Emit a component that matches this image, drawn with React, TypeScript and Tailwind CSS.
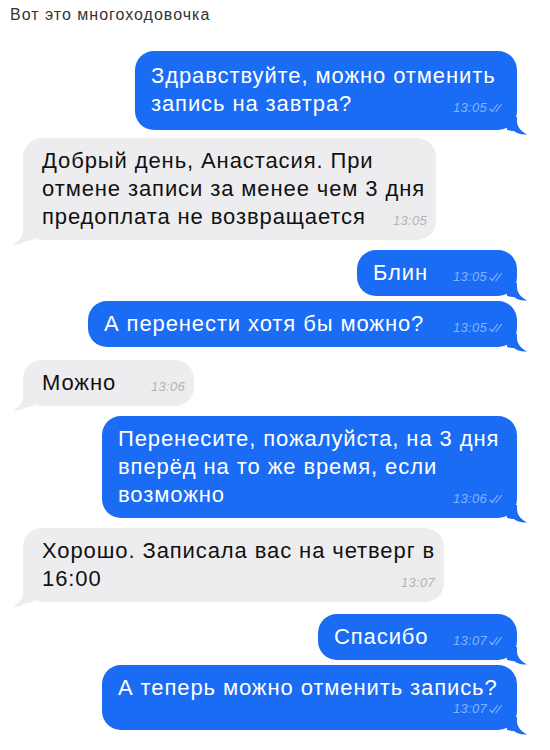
import React from "react";

type Message = {
  out: boolean;
  lines: string[];
  time: string;
  width: string;
  gap: string;
  extra?: string;
  timeOwnLine?: boolean;
};

const messages: Message[] = [
  { out: true, lines: ["Здравствуйте, можно отменить", "запись на завтра?"], time: "13:05", width: "w-[382px]", gap: "mt-0", extra: "pt-[11px] pb-[12px]" },
  { out: false, lines: ["Добрый день, Анастасия. При", "отмене записи за менее чем 3 дня", "предоплата не возвращается"], time: "13:05", width: "w-[413px]", gap: "mt-[8px]" },
  { out: true, lines: ["Блин"], time: "13:05", width: "w-[160px]", gap: "mt-[10px]" },
  { out: true, lines: ["А перенести хотя бы можно?"], time: "13:05", width: "w-[429px]", gap: "mt-[5px]" },
  { out: false, lines: ["Можно"], time: "13:06", width: "w-[171px]", gap: "mt-[13px]" },
  { out: true, lines: ["Перенесите, пожалуйста, на 3 дня", "вперёд на то же время, если", "возможно"], time: "13:06", width: "w-[415px]", gap: "mt-[10px]" },
  { out: false, lines: ["Хорошо. Записала вас на четверг в", "16:00"], time: "13:07", width: "w-[421px]", gap: "mt-[10px]" },
  { out: true, lines: ["Спасибо"], time: "13:07", width: "w-[199px]", gap: "mt-[12px]" },
  { out: true, lines: ["А теперь можно отменить запись?"], time: "13:07", width: "w-[415px]", gap: "mt-[5px]", extra: "pt-[9px] pb-[15px]", timeOwnLine: true },
];

function DoubleCheck() {
  return (
    <svg width="14" height="10" viewBox="0 0 14 10" className="ml-[2px]" fill="none" stroke="currentColor" strokeWidth="1.2" strokeLinecap="round">
      <path d="M1 6 L3.2 8.5 L8.5 1.5" />
      <path d="M7 8.5 L12.5 1.5" />
    </svg>
  );
}

function Tail({ out }: { out: boolean }) {
  return (
    <svg
      width="20"
      height="18"
      viewBox="0 0 20 18"
      className={
        out
          ? "absolute -right-[10px] -bottom-[5px] text-[#1a6cf4]"
          : "absolute -left-[10px] -bottom-[5px] -scale-x-100 text-[#ededef]"
      }
    >
      <path d="M0 0 H10 V4 C10 9 13 14 20 17.5 C14 18 10 16.5 7 14 C4 14 2 13.5 0 13 Z" fill="currentColor" />
    </svg>
  );
}

function Time({ msg }: { msg: Message }) {
  return (
    <span
      className={
        msg.out
          ? "flex items-center italic text-[13px] leading-none tracking-[0.3px] text-[#86b3fb]"
          : "flex items-center italic text-[13px] leading-none tracking-[0.3px] text-[#b3b3b6]"
      }
    >
      {msg.time}
      {msg.out && <DoubleCheck />}
    </span>
  );
}

function Bubble({ msg }: { msg: Message }) {
  const last = msg.lines.length - 1;
  return (
    <div
      className={`relative ${msg.width} ${msg.gap} ${msg.extra ?? "py-[9px]"} rounded-[19px] whitespace-nowrap text-[22px] leading-[28px] tracking-[0.9px] ${
        msg.out ? "self-end bg-[#1a6cf4] text-white pl-[16px] pr-[14px]" : "self-start bg-[#ededef] text-[#111] pl-[19px] pr-[9px]"
      }`}
    >
      {msg.lines.map((line, i) =>
        i === last && !msg.timeOwnLine ? (
          <div key={i} className="flex items-end justify-between">
            <span>{line}</span>
            <span className="pb-[4px] pl-[14px]">
              <Time msg={msg} />
            </span>
          </div>
        ) : (
          <div key={i}>{line}</div>
        )
      )}
      {msg.timeOwnLine && (
        <div className="flex justify-end">
          <Time msg={msg} />
        </div>
      )}
      <Tail out={msg.out} />
    </div>
  );
}

export default function App() {
  return (
    <div className="w-[550px] h-[750px] overflow-hidden bg-white font-['Liberation_Sans',Arial,sans-serif]">
      <div className="h-[51px] pl-[10px] pt-[5px] text-[16px] leading-[20px] tracking-[1px] text-[#333]">
        Вот это многоходовочка
      </div>
      <div className="flex flex-col pl-[23px] pr-[33px]">
        {messages.map((m, i) => (
          <Bubble key={i} msg={m} />
        ))}
      </div>
    </div>
  );
}
